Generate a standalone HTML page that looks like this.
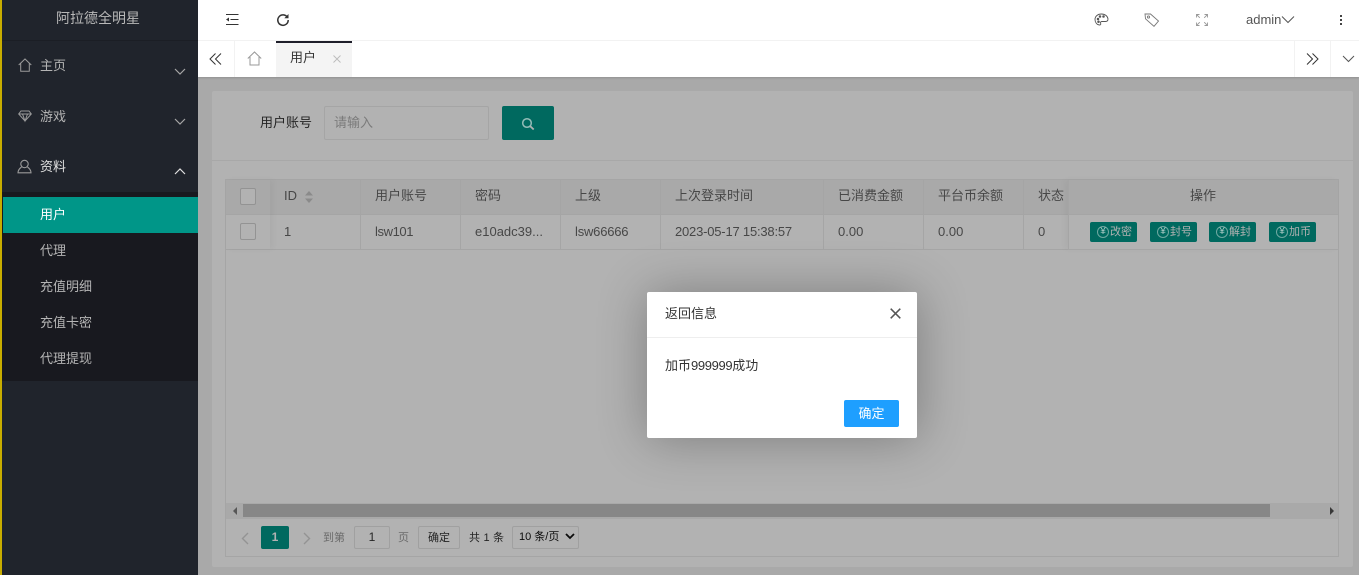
<!DOCTYPE html>
<html lang="zh"><head><meta charset="utf-8"><title>用户</title>
<style>
*{box-sizing:border-box}
html,body{margin:0;padding:0;width:1359px;height:575px;overflow:hidden;background:#a9a9a9;font:13px/20px "Liberation Sans","Noto Sans CJK SC",sans-serif;color:#474747}
.a{position:absolute}
.t{position:absolute;white-space:nowrap;line-height:20px}
svg{position:absolute;overflow:visible;fill:none}
.line{position:absolute;background:#a5a5a5}
.th,.td{position:absolute;white-space:nowrap;line-height:20px;color:#474747;font-size:13px}
.btn{position:absolute;top:222px;width:47px;height:20px;background:#00695f;border-radius:2px;color:#b2b2b2;font-size:11px;line-height:20px;padding-left:20px}
.btn i{position:absolute;left:7px;top:4px;width:12px;height:12px;border:1px solid #6fa8a1;border-radius:50%;font:normal 10px/10px "Liberation Sans",sans-serif;text-align:center;color:#a8c8c4}
.side{color:#b4b4b4;font-size:13px}
</style></head>
<body>
<!-- main content -->
<div class="a" style="left:212px;top:91px;width:1141px;height:476px;background:#b2b2b2;border-radius:2px"></div>
<div class="line" style="left:212px;top:160px;width:1141px;height:1px;background:#a8a8a8"></div>
<div class="t" style="left:260px;top:113px;color:#242424">用户账号</div>
<div class="a" style="left:324px;top:106px;width:165px;height:34px;border:1px solid #a5a5a5;border-radius:2px"></div>
<div class="t" style="left:334px;top:113px;color:#7b7b7b">请输入</div>
<div class="a" style="left:502px;top:106px;width:52px;height:34px;background:#00695f;border-radius:2px"></div>
<svg style="left:521px;top:117px" width="15" height="14" viewBox="0 0 15 14"><circle cx="6" cy="6" r="4.300" stroke="#95bdb8" stroke-width="1.500"/><path d="M9.300 9.300l3.400 3.200" stroke="#b2b2b2" stroke-width="1.800"/></svg>

<!-- table -->
<div class="a" style="left:225px;top:179px;width:1114px;height:378px;border:1px solid #a5a5a5"></div>
<div class="a" style="left:226px;top:180px;width:1112px;height:34px;background:#a9a9a9"></div>
<div class="line" style="left:226px;top:214px;width:1112px;height:1px"></div>
<div class="line" style="left:226px;top:249px;width:1112px;height:1px"></div>
<div class="line" style="left:360px;top:180px;width:1px;height:69px"></div>
<div class="line" style="left:460px;top:180px;width:1px;height:69px"></div>
<div class="line" style="left:560px;top:180px;width:1px;height:69px"></div>
<div class="line" style="left:660px;top:180px;width:1px;height:69px"></div>
<div class="line" style="left:823px;top:180px;width:1px;height:69px"></div>
<div class="line" style="left:923px;top:180px;width:1px;height:69px"></div>
<div class="line" style="left:1023px;top:180px;width:1px;height:69px"></div>
<!-- fixed left -->
<div class="a" style="left:226px;top:180px;width:44px;height:69px;box-shadow:3px 0 6px rgba(0,0,0,.04)"></div>
<div class="a" style="left:240px;top:188px;width:16px;height:17px;border:1px solid #939393;border-radius:2px;background:#b2b2b2"></div>
<div class="a" style="left:240px;top:223px;width:16px;height:17px;border:1px solid #939393;border-radius:2px;background:#b2b2b2"></div>
<div class="th" style="left:284px;top:186px">ID</div>
<svg style="left:304px;top:190px" width="10" height="14"><path d="M1 5.500L5 1l4 4.500zM1 8.500l4 4.500 4-4.500z" fill="#8a8a8a"/></svg>
<div class="th" style="left:375px;top:186px">用户账号</div>
<div class="th" style="left:475px;top:186px">密码</div>
<div class="th" style="left:575px;top:186px">上级</div>
<div class="th" style="left:675px;top:186px">上次登录时间</div>
<div class="th" style="left:838px;top:186px">已消费金额</div>
<div class="th" style="left:938px;top:186px">平台币余额</div>
<div class="th" style="left:1038px;top:186px">状态</div>
<div class="td" style="left:284px;top:222px">1</div>
<div class="td" style="left:375px;top:222px;letter-spacing:-.4px">lsw101</div>
<div class="td" style="left:475px;top:222px">e10adc39...</div>
<div class="td" style="left:575px;top:222px;letter-spacing:-.2px">lsw66666</div>
<div class="td" style="left:675px;top:222px;letter-spacing:-.2px">2023-05-17 15:38:57</div>
<div class="td" style="left:838px;top:222px">0.00</div>
<div class="td" style="left:938px;top:222px">0.00</div>
<div class="td" style="left:1038px;top:222px">0</div>
<!-- fixed right -->
<div class="a" style="left:1068px;top:180px;width:270px;height:69px;background:#b2b2b2;box-shadow:-3px 0 6px rgba(0,0,0,.04)"></div>
<div class="a" style="left:1068px;top:180px;width:270px;height:34px;background:#a9a9a9;border-left:1px solid #a5a5a5"></div>
<div class="line" style="left:1068px;top:214px;width:270px;height:1px"></div>
<div class="line" style="left:1068px;top:249px;width:270px;height:1px"></div>
<div class="line" style="left:1068px;top:215px;width:1px;height:34px"></div>
<div class="th" style="left:1190px;top:186px">操作</div>
<div class="btn" style="left:1090px"><i>¥</i>改密</div>
<div class="btn" style="left:1150px"><i>¥</i>封号</div>
<div class="btn" style="left:1209px"><i>¥</i>解封</div>
<div class="btn" style="left:1269px"><i>¥</i>加币</div>
<!-- scrollbar -->
<div class="a" style="left:226px;top:503px;width:1112px;height:16px;background:#a9a9a9"></div>
<div class="a" style="left:243px;top:504px;width:1027px;height:13px;background:#878787"></div>
<svg style="left:232px;top:507px" width="6" height="8"><path d="M5 0v8L1 4z" fill="#575757"/></svg>
<svg style="left:1329px;top:507px" width="6" height="8"><path d="M1 0v8l4-4z" fill="#383838"/></svg>
<!-- pager -->
<svg style="left:240px;top:532px" width="10" height="13"><path d="M8 1L2.500 6.500 8 12" stroke="#939393" stroke-width="1.400"/></svg>
<div class="a" style="left:261px;top:526px;width:28px;height:23px;background:#00695f;border-radius:2px;color:#b2b2b2;text-align:center;line-height:23px;font-size:12px;font-weight:700">1</div>
<svg style="left:302px;top:532px" width="10" height="13"><path d="M2 1l5.500 5.500L2 12" stroke="#939393" stroke-width="1.400"/></svg>
<div class="t" style="left:323px;top:528px;font-size:11px;color:#6b6b6b">到第</div>
<div class="a" style="left:354px;top:526px;width:36px;height:23px;border:1px solid #a0a0a0;border-radius:2px;text-align:center;line-height:21px;font-size:12px;color:#242424">1</div>
<div class="t" style="left:398px;top:528px;font-size:11px;color:#6b6b6b">页</div>
<div class="a" style="left:418px;top:526px;width:42px;height:23px;border:1px solid #a0a0a0;border-radius:2px;text-align:center;line-height:23px;font-size:11px;color:#242424">确定</div>
<div class="t" style="left:469px;top:528px;font-size:11px;color:#242424;letter-spacing:.2px">共 1 条</div>
<div class="a" style="left:512px;top:526px;width:67px;height:23px;border:1px solid #a0a0a0;border-radius:2px;line-height:21px;font-size:11px;color:#0c0c0c;padding-left:6px">10 条/页</div>
<svg style="left:565px;top:533px" width="10" height="7"><path d="M1 1l4 4 4-4" stroke="#0c0c0c" stroke-width="1.800"/></svg>

<!-- top header -->
<div class="a" style="left:198px;top:0;width:1161px;height:77px;background:#fff;box-shadow:0 1px 2px rgba(0,0,0,.15)"></div>
<div class="line" style="left:198px;top:40px;width:1161px;height:1px;background:#f2f2f2"></div>
<svg style="left:225px;top:14px" width="14" height="12" stroke="#333" stroke-width="1.100"><path d="M1 .5h12.500M5.500 5.500h8M1 10.500h12.500"/><path d="M4 3.500L1 5.500l3 2z" fill="#333" stroke="none"/></svg>
<svg style="left:276px;top:13px" width="14" height="14" viewBox="0 0 14 14"><path d="M11.500 4.500A5.200 5.200 0 1 0 12.200 7" stroke="#333" stroke-width="1.500"/><path d="M12.500 1v4.300H8.300z" fill="#333"/></svg>
<!-- right icons -->
<svg style="left:1094px;top:13px" width="15" height="13" viewBox="0 0 15 13" stroke="#555" stroke-width=".9"><path d="M7.500 1C3.500 1 1 3.500 1 6.500 1 9.500 3 12 5.500 12c1.300 0 1.500-.9 1.100-1.800-.4-1 .3-1.700 1.400-1.700h3.500C13.500 8.500 14 7.300 14 6 13.600 3 11 1 7.500 1z"/><circle cx="4" cy="6" r=".8" fill="#555"/><circle cx="6" cy="3.500" r=".8" fill="#555"/><circle cx="9.500" cy="3.500" r=".8" fill="#555"/><circle cx="4.500" cy="8.800" r=".8" fill="#555"/></svg>
<svg style="left:1144px;top:13px" width="16" height="14" viewBox="0 0 16 14" stroke="#777" stroke-width=".9"><path d="M1 1h5.500l8 7-4.500 5.300-8.500-7.500z"/><circle cx="4.500" cy="4" r="1.100"/></svg>
<svg style="left:1196px;top:14px" width="12" height="12" viewBox="0 0 12 12" stroke="#999" stroke-width=".9"><path d="M.5 3.500v-3h3M.8.800l3 3M8.500.5h3v3M11.200.800l-3 3M.5 8.500v3h3M.8 11.200l3-3M11.500 8.500v3h-3M11.200 11.200l-3-3"/></svg>
<div class="t" style="left:1246px;top:10px;color:#555;font-size:13px">admin</div>
<svg style="left:1281px;top:15px" width="14" height="9"><path d="M1 1.500l6 6 6-6" stroke="#555"/></svg>
<div class="a" style="left:1340px;top:15px;width:2px;height:2px;background:#444"></div>
<div class="a" style="left:1340px;top:19px;width:2px;height:2px;background:#444"></div>
<div class="a" style="left:1340px;top:23px;width:2px;height:2px;background:#444"></div>
<!-- tabs -->
<div class="a" style="left:234px;top:41px;width:1px;height:36px;background:#f2f2f2"></div>
<svg style="left:209px;top:53px" width="13" height="12" stroke="#333" stroke-width="1"><path d="M6.500 .5L1 6l5.500 5.500M12 .5L6.500 6l5.500 5.500"/></svg>
<svg style="left:247px;top:51px" width="15" height="15" viewBox="0 0 15 15" stroke="#999" stroke-width="1"><path d="M.8 7.500L7.500 1l6.700 6.500M3 6v8h9V6"/></svg>
<div class="a" style="left:276px;top:41px;width:76px;height:36px;background:#f4f4f4;border-top:2px solid #1e1e2a"></div>
<div class="t" style="left:290px;top:48px;color:#333;font-size:13px">用户</div>
<svg style="left:333px;top:55px" width="8" height="8" stroke="#bdbdbd" stroke-width="1"><path d="M.5 .5l7 7M7.500 .5l-7 7"/></svg>
<div class="a" style="left:1294px;top:41px;width:1px;height:36px;background:#f2f2f2"></div>
<div class="a" style="left:1330px;top:41px;width:1px;height:36px;background:#f2f2f2"></div>
<svg style="left:1306px;top:53px" width="13" height="12" stroke="#333" stroke-width="1"><path d="M1 .5L6.500 6 1 11.500M6.500 .5L12 6l-5.500 5.500"/></svg>
<svg style="left:1342px;top:55px" width="13" height="8"><path d="M1 1l5.500 5.500L12 1" stroke="#555"/></svg>

<!-- sidebar -->
<div class="a" style="left:0;top:0;width:198px;height:575px;background:#20242c"></div>
<div class="a" style="left:0;top:0;width:2px;height:575px;background:#c8ad00"></div>
<div class="line" style="left:2px;top:40px;width:196px;height:1px;background:#1b1e25"></div>
<div class="t" style="left:56px;top:8px;color:#b8b8b8;font-size:14px">阿拉德全明星</div>
<div class="t side" style="left:40px;top:56px">主页</div>
<div class="t side" style="left:40px;top:107px">游戏</div>
<div class="t side" style="left:40px;top:157px;color:#e0e0e0">资料</div>
<svg style="left:18px;top:58px" width="14" height="14" viewBox="0 0 14 14" stroke="#9a9a9a" stroke-width="1"><path d="M.7 7L7 1l6.300 6M2.700 5.500v7.800h8.600V5.500"/></svg>
<svg style="left:18px;top:110px" width="14" height="12" viewBox="0 0 14 12" stroke="#9a9a9a" stroke-width="1"><path d="M3 1h8l2.300 3L7 11 .7 4zM.7 4h12.600M4.500 4L7 11l2.500-7"/></svg>
<svg style="left:17px;top:159px" width="15" height="15" viewBox="0 0 15 15" stroke="#9a9a9a" stroke-width="1.100"><circle cx="7.500" cy="5" r="3.700"/><path d="M4.500 8C2.500 9.500 1 11.500 1 13.800h13C14 11.500 12.500 9.500 10.500 8"/></svg>
<svg style="left:174px;top:68px" width="12" height="7"><path d="M1 1l5 5 5-5" stroke="#a6a6a6" stroke-width="1.200"/></svg>
<svg style="left:174px;top:118px" width="12" height="7"><path d="M1 1l5 5 5-5" stroke="#a6a6a6" stroke-width="1.200"/></svg>
<svg style="left:174px;top:168px" width="12" height="7"><path d="M1 6l5-5 5 5" stroke="#e0e0e0" stroke-width="1.200"/></svg>
<div class="a" style="left:2px;top:192px;width:196px;height:189px;background:#18191f"></div>
<div class="a" style="left:3px;top:197px;width:195px;height:36px;background:#009688"></div>
<div class="t side" style="left:40px;top:205px;color:#fff">用户</div>
<div class="t side" style="left:40px;top:241px">代理</div>
<div class="t side" style="left:40px;top:277px">充值明细</div>
<div class="t side" style="left:40px;top:313px">充值卡密</div>
<div class="t side" style="left:40px;top:349px">代理提现</div>

<!-- modal -->
<div class="a" style="left:647px;top:292px;width:270px;height:146px;background:#fff;border-radius:2px;box-shadow:1px 1px 50px rgba(0,0,0,.3)"></div>
<div class="line" style="left:647px;top:337px;width:270px;height:1px;background:#eee"></div>
<div class="t" style="left:665px;top:304px;color:#333">返回信息</div>
<svg style="left:890px;top:308px" width="11" height="11" stroke="#555" stroke-width="1.500"><path d="M.7 .7l9.600 9.600M10.300 .7L.7 10.300"/></svg>
<div class="t" style="left:665px;top:356px;color:#333">加币<span style="letter-spacing:-.35px">999999</span>成功</div>
<div class="a" style="left:844px;top:400px;width:55px;height:27px;background:#1e9fff;border-radius:2px;color:#fff;text-align:center;line-height:27px;font-size:13px">确定</div>
</body></html>
